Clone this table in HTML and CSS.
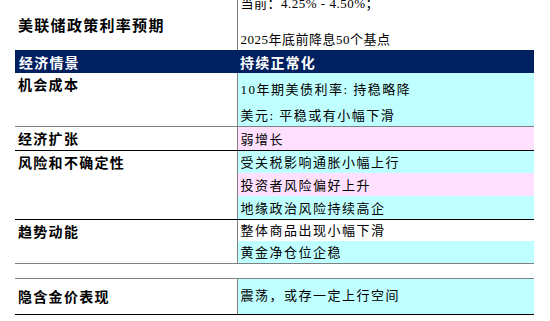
FILE: index.html
```html
<!DOCTYPE html>
<html lang="zh-CN">
<head>
  <meta charset="UTF-8" />
  <title>美联储政策利率预期</title>
  <link rel="stylesheet" href="styles.css">
</head>
<body>
  <table class="sheet">
    <colgroup>
      <col class="col-label">
      <col class="col-value">
    </colgroup>
    <tr class="title-row">
      <td class="label title">美联储政策利率预期</td>
      <td class="value plain">
        <div class="stack">
          <span>当前：4.25% - 4.50%；</span>
          <span>2025年底前降息50个基点</span>
        </div>
      </td>
    </tr>
    <tr class="head-row">
      <td class="head">经济情景</td>
      <td class="head">持续正常化</td>
    </tr>
    <tr class="h27">
      <td class="label top gray-bottom" rowspan="2">机会成本</td>
      <td class="value cyan">10年期美债利率: 持稳略降</td>
    </tr>
    <tr class="h26">
      <td class="value cyan gray-bottom">美元: 平稳或有小幅下滑</td>
    </tr>
    <tr class="h24">
      <td class="label mid black-bottom">经济扩张</td>
      <td class="value pink black-bottom">弱增长</td>
    </tr>
    <tr class="h23">
      <td class="label top black-bottom" rowspan="3">风险和不确定性</td>
      <td class="value cyan">受关税影响通胀小幅上行</td>
    </tr>
    <tr class="h23">
      <td class="value pink">投资者风险偏好上升</td>
    </tr>
    <tr class="h23">
      <td class="value cyan black-bottom">地缘政治风险持续高企</td>
    </tr>
    <tr class="h22">
      <td class="label top gray-bottom" rowspan="2">趋势动能</td>
      <td class="value plain">整体商品出现小幅下滑</td>
    </tr>
    <tr class="h22">
      <td class="value cyan gray-bottom">黄金净仓位企稳</td>
    </tr>
    <tr class="h15">
      <td class="gap gray-bottom"></td>
      <td class="gap gray-bottom"></td>
    </tr>
    <tr class="h36">
      <td class="label mid black-bottom">隐含金价表现</td>
      <td class="value cyan mid black-bottom">震荡，或存一定上行空间</td>
    </tr>
  </table>
</body>
</html>
```

FILE: styles.css
```css
body {
  margin: 0;
  padding: 0 0 0 15px;
  background-color: #ffffff;
  font-family: "Noto Sans CJK SC", sans-serif;
  color: #000000;
}

.sheet {
  border-collapse: collapse;
  table-layout: fixed;
  width: 519px;
}

.col-label {
  width: 222px;
}

.col-value {
  width: 297px;
}

td {
  padding: 0;
  white-space: nowrap;
  overflow: hidden;
}

.label {
  padding-left: 3px;
  font-size: 14px;
  font-weight: bold;
  letter-spacing: 1.3px;
  line-height: 16px;
  border-right: 1px solid #808080;
}

.label.top {
  vertical-align: top;
  padding-top: 3px;
}

.label.mid {
  vertical-align: middle;
}

.title {
  font-size: 15px;
  letter-spacing: 1.3px;
  vertical-align: middle;
}

.value {
  padding-left: 3px;
  font-family: "Liberation Serif", "Noto Sans CJK SC", serif;
  font-size: 13px;
  letter-spacing: 1.5px;
  line-height: 16px;
  vertical-align: bottom;
  padding-bottom: 2px;
}

.value.mid {
  vertical-align: middle;
  padding-bottom: 0;
}

.stack {
  display: flex;
  flex-direction: column;
  justify-content: space-between;
  height: 52px;
  margin-top: -4px;
  letter-spacing: 0.5px;
}

.title-row {
  height: 50px;
}

.head-row {
  height: 23px;
}

.head {
  background-color: #002060;
  color: #ffffff;
  font-size: 14px;
  font-weight: bold;
  letter-spacing: 1.2px;
  padding-left: 4px;
  vertical-align: middle;
}

.head + .head {
  padding-left: 3px;
}

.cyan {
  background-color: #c0ffff;
}

.pink {
  background-color: #ffe1ff;
}

.plain {
  background-color: #ffffff;
}

.gap {
  border-right: none;
}

.gap:first-child {
  border-right: 1px solid #ffffff;
}

.gray-bottom {
  border-bottom: 1px solid #808080;
}

.black-bottom {
  border-bottom: 1px solid #000000;
}

.h27 { height: 27px; }
.h26 { height: 26px; }
.h24 { height: 24px; }
.h23 { height: 23px; }
.h22 { height: 22px; }
.h15 { height: 15px; }
.h36 { height: 36px; }
```
